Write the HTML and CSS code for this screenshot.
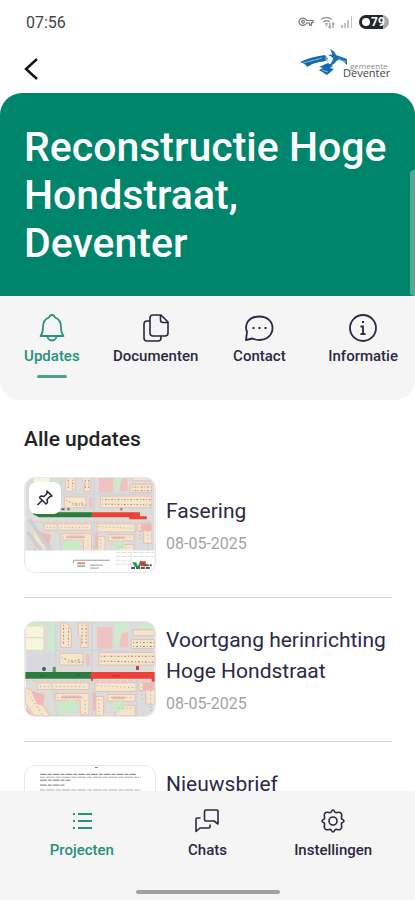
FILE: index.html
```html
<!DOCTYPE html>
<html lang="nl">
<head>
<meta charset="utf-8">
<meta name="viewport" content="width=device-width, initial-scale=1">
<title>Reconstructie Hoge Hondstraat</title>
<link rel="stylesheet" href="styles.css">
</head>
<body>
<svg class="defs" aria-hidden="true">
  <defs>
    <symbol id="streets" viewBox="0 0 132 96">
      <rect width="132" height="96" fill="#dcdddb"/>
      <path d="M0 4h19v25H0z" fill="#f9f5da" stroke="#ddd6c0"/><path d="M0 16h19" stroke="#ddd6c0"/>
      <path d="M0 31h30v20H0z" fill="#d8d8df"/>
      <path d="M25 0h6v30h-8zM2 0h18v4H2zM92 0h15l-4 16-5 9-9-2 3-9zM118 0h14v8h-16z" fill="#cdebcb"/>
      <path d="M73 5h16v22H73zM98 12l7-2v16h-9zM62 32h4v13h-4z" fill="#efc3c2"/>
      <g fill="#f4e5cb" stroke="#e6bdb4" stroke-width="1">
        <path d="M36 1h5q6 3 6 12v13H36zM54 1h10v25h-8q3-10-2-13zM110 8h22v6h-22zM108 18h24v9h-24zM35 32h24v12H35zM75 31h57v13H75z"/>
        <path d="M12 62h53v7H12zM71 62h42v9H71zM116 62h16v22h-9V70h-7zM31 73h34v22h-9V80H31zM72 76h8v20h-8zM84 74h28v7H84zM92 85h20v11H92z"/>
        <path d="M0 67l9 4 16 25H9L0 83z"/>
      </g>
      <path d="M6 71l14 3-2 11-6-1zM37 75h20v3H37zM67 72h5v18h-5zM88 76h14v3H88zM120 62h12v8h-12zM0 87l8 9H0z" fill="#efb9b8"/>
      <path d="M35 82l15-3 4 6-3 7H36l-4 3zM88 84l10-4 4 8-9 5z" fill="#c9eac6"/>
      <g fill="none" stroke="#9a857b" stroke-width="1" stroke-dasharray="1 2 2 2">
        <path d="M39 3v21M44 6v18M58 3v21M62 3v21M110 21h22M110 25h22M77 35h54M77 40l54 1M37 36q10 6 20 2M44 41h15"/>
      </g>
      <g fill="none" stroke="#bba093" stroke-width="1" stroke-dasharray="1 3">
        <path d="M15 66h48M73 65l38 2M119 66v15M128 66v25M33 77h28M61 80v14M75 79v17M87 77h22M95 88h15M3 73l14 21"/>
      </g>
      <path d="M31 0v51M68 0v96M26 60l7 36M114 60v36M31 29h101" fill="none" stroke="#d2d6da" stroke-width="2"/>
      <path d="M0 60h132" stroke="#e6c2bd" stroke-width="1" stroke-dasharray="5 2"/>
    </symbol>
  </defs>
</svg>

<div class="app">
  <div class="status">
    <span class="status-time">07:56</span>
    <div class="status-icons">
      <svg width="16" height="10" viewBox="0 0 16 10" fill="none" stroke="#777" stroke-width="1.2" aria-hidden="true"><path d="M8.700 3.500H15v2.200h-1.500v2.500h-2V6H8.700A4 3.600 0 1 1 8.700 3.500z"/><circle cx="5" cy="4.800" r="1.400"/></svg>
      <svg width="15" height="13" viewBox="0 0 15 13" fill="none" stroke="#9b9b9b" stroke-width="1.300" aria-hidden="true"><path d="M1 3.500Q6.500-.5 12 3.500M3 6q3.500-2.500 7 0M5 8.200q1.500-1 3 0M6.500 10.500V9M10 7v5l-1.500-1.500M13 12V7l1.500 1.500"/></svg>
      <svg width="12" height="12" viewBox="0 0 12 12" fill="#c2c2c2" aria-hidden="true"><path d="M0 9h2v3H0zM3 7h2v5H3zM6 4h2v8H6zM10 0h1v12h-1z"/></svg>
      <span class="battery"><span class="battery-dot"></span>79</span>
    </div>
  </div>

  <header class="topbar">
    <button class="back" type="button" aria-label="Terug">
      <svg width="14" height="22" viewBox="0 0 14 22" fill="none" stroke="#111" stroke-width="2.400" aria-hidden="true"><path d="M13 1L2 11l11 10"/></svg>
    </button>
    <svg class="logo" width="94" height="40" viewBox="0 0 94 40" role="img" aria-label="gemeente Deventer">
      <path d="M0 13Q10 8 25 6l3 4q-3 3-9 3-6 1-12 5-1-3-7-5z" fill="#1269ad"/>
      <path d="M19 18l9-4 5 3-3 2 4 1-7 6-8-5 4-2z" fill="#1269ad"/>
      <path d="M30 0q5 2 6 6l11 4v6q-3-4-7-5-4 0-5 3-3 3-7 3 5-4 5-8-2-2-5-3 3-1 4 0 0-3-2-6z" fill="#1a70b3"/>
      <path d="M26 7q-1 3 2 6M3 14l19-5M22 21l6 2M38 10l8 3" fill="none" stroke="#8abce0" stroke-width="1"/>
      <text class="logo-small" x="50" y="20">gemeente</text>
      <text class="logo-name" x="43" y="28">Deventer</text>
    </svg>
  </header>

  <main class="page">
    <section class="hero">
      <h1>Reconstructie Hoge Hondstraat, Deventer</h1>
      <span class="scroll-thumb"></span>
    </section>

    <nav class="tabs" aria-label="Project">
      <a class="tab tab-active" href="#updates">
        <svg width="30" height="30" viewBox="0 0 30 30" fill="none" stroke="currentColor" stroke-width="1.800" stroke-linejoin="round" aria-hidden="true"><path d="M3.500 23h23c-2-2.500-2.500-4-2.500-9 0-5-2-8-6-9.500q-1-2.500-3-2.500t-3 2.500C8 6 6 9 6 14c0 5-.5 6.500-2.500 9zM10.500 23a4.500 4.500 0 0 0 9 0"/></svg>
        <span>Updates</span>
      </a>
      <a class="tab" href="#documenten">
        <svg width="30" height="30" viewBox="0 0 30 30" fill="none" stroke="currentColor" stroke-width="1.600" stroke-linejoin="round" aria-hidden="true"><path d="M12 2h8l7 7v11a3 3 0 0 1-3 3H12a3 3 0 0 1-3-3V5a3 3 0 0 1 3-3zM19.500 2.500V7a2.500 2.500 0 0 0 2.500 2.500h4.500M9 8H6a3 3 0 0 0-3 3v14a3 3 0 0 0 3 3h11a3 3 0 0 0 3-3v-2"/></svg>
        <span>Documenten</span>
      </a>
      <a class="tab" href="#contact">
        <svg width="30" height="30" viewBox="0 0 30 30" fill="none" stroke="currentColor" stroke-width="1.800" stroke-linejoin="round" aria-hidden="true"><path d="M2 27l1-8C-.5 10 6 3.500 15.500 3.500c8 0 13 5 13 11.500s-5 12-13 12c-3 0-5-.5-7-1.500z"/><path d="M8.500 15h2M14.500 15h2M20.500 15h2" stroke-width="2"/></svg>
        <span>Contact</span>
      </a>
      <a class="tab" href="#informatie">
        <svg width="30" height="30" viewBox="0 0 30 30" fill="none" stroke="currentColor" stroke-width="1.800" aria-hidden="true"><circle cx="15" cy="15" r="13"/><path d="M12.500 13.500H15V21M12.500 21h5M14 9h2"/></svg>
        <span>Informatie</span>
      </a>
    </nav>

    <section class="updates" id="updates">
      <h2>Alle updates</h2>
      <ul>
        <li>
          <a class="update" href="#fasering">
            <span class="thumb">
              <svg viewBox="0 0 132 96" aria-hidden="true">
                <rect width="132" height="96" fill="#dcdddb"/>
                <use href="#streets" x="8" y="-10" width="121" height="88"/>
                <path d="M4 42l22 33M2 55l16 21" stroke="#ccd0d4" stroke-width="4"/>
                <path d="M8 35h60v5H14l-6-3z" fill="#2b7d3d"/><path d="M68 35h49v4h7v3h-18v-2H68z" fill="#ee4238"/>
                <path d="M37 32h3M43 32h2" stroke="#41694b" stroke-width="2"/><path d="M97 32h2" stroke="#c64b59" stroke-width="2"/>
                <path d="M0 74h132v22H0z" fill="#fff"/>
                <path d="M49 84h37M49 84v3M66 89h13M66 92h9" stroke="#999" fill="none"/>
                <path d="M53 86h8v2h-8z" fill="#d88"/><path d="M53 89h8v2h-8z" fill="#9b8"/>
                <path d="M92 76h40M92 80h40M92 84h18M92 88h18M108 76v16" stroke="#ddd" stroke-dasharray="5 1"/>
                <path d="M109 86h4l2 4 2-5h2l-2 6h-5z" fill="#1f9c55"/><path d="M117 85h6v5h-5z" fill="#d83b36"/>
                <path d="M108 92h20M122 89h7" stroke="#4f5b4b" stroke-width="2" stroke-dasharray="4 1"/>
              </svg>
              <span class="pin">
                <svg width="18" height="18" viewBox="0 0 18 18" fill="none" stroke="#25213f" stroke-width="1.500" stroke-linejoin="round" aria-hidden="true"><path d="M11 2l5 5-2 .5-3 3 .5 3L10 15 3.500 8.500 5 7l3 .5 3-3zM6 11.500L1.500 16"/></svg>
              </span>
            </span>
            <span class="update-text">
              <span class="update-title">Fasering</span>
              <time datetime="2025-05-08">08-05-2025</time>
            </span>
          </a>
        </li>
        <li>
          <a class="update" href="#voortgang">
            <span class="thumb">
              <svg viewBox="0 0 132 96" aria-hidden="true">
                <use href="#streets" width="132" height="96"/>
                <path d="M0 51h67v7H0z" fill="#2b7d3d"/><path d="M67 51h65v10h-3v-3H69v2h-2z" fill="#ee3f38"/>
                <circle cx="19" cy="48" r="2" fill="#35624b"/><path d="M28 46h3v5h-3z" fill="#4d9860"/><path d="M113 45h3v4h-3z" fill="#c83a55"/>
                <path d="M15 55h5M52 54h4" stroke="#1f6532"/><path d="M88 55h8" stroke="#c42d2a"/>
              </svg>
            </span>
            <span class="update-text">
              <span class="update-title">Voortgang herinrichting Hoge Hondstraat</span>
              <time datetime="2025-05-08">08-05-2025</time>
            </span>
          </a>
        </li>
        <li>
          <a class="update update-top" href="#nieuwsbrief">
            <span class="thumb">
              <svg viewBox="0 0 132 96" aria-hidden="true">
                <rect width="132" height="96" fill="#fff"/>
                <g fill="none" stroke="#777" stroke-width="1"><path d="M71 1.500h3"/><path d="M15 8.500h99M15 14.500h31M15 19.500h25" stroke-dasharray="7 1 4 1"/><path d="M15 11.500h103M15 24.500h103" stroke="#aaa" stroke-dasharray="5 1 9 1"/></g>
              </svg>
            </span>
            <span class="update-text"><span class="update-title">Nieuwsbrief</span></span>
          </a>
        </li>
      </ul>
    </section>
  </main>

  <footer class="bottom">
    <nav class="bottom-nav" aria-label="Hoofdmenu">
      <a class="nav-item nav-active" href="#projecten">
        <svg width="24" height="24" viewBox="0 0 24 24" fill="none" stroke="currentColor" stroke-width="2" aria-hidden="true"><path d="M8 5h14M8 12h14M8 19h14M3 5h2M3 12h2M3 19h2"/></svg>
        <span>Projecten</span>
      </a>
      <a class="nav-item" href="#chats">
        <svg width="24" height="24" viewBox="0 0 24 24" fill="none" stroke="currentColor" stroke-width="1.600" stroke-linejoin="round" aria-hidden="true"><path d="M11 1h11a1 1 0 0 1 1 1v13l-4-3h-8a1.500 1.500 0 0 1-1.500-1.500v-8A1.500 1.500 0 0 1 11 1zM5.500 9H2a1 1 0 0 0-1 1v12.500L5 19h9a1 1 0 0 0 1-1v-2.500"/></svg>
        <span>Chats</span>
      </a>
      <a class="nav-item" href="#instellingen">
        <svg width="24" height="24" viewBox="0 0 24 24" fill="none" stroke="currentColor" stroke-width="1.600" stroke-linejoin="round" aria-hidden="true"><path d="M12 1q1 0 1.500 1.500T16 3.500t3 0 1.500 1.500 0 3 1 2.500T23 12t-1.500 1.500-1 2.500 0 3-1.500 1.500-3 0-2.500 1T12 23t-1.500-1.500-2.500-1-3 0T3.500 19t0-3-1-2.500T1 12t1.500-1.500 1-2.500 0-3T5 3.500t3 0 2.500-1T12 1z"/><circle cx="12" cy="12" r="4"/></svg>
        <span>Instellingen</span>
      </a>
    </nav>
    <div class="home-bar"></div>
  </footer>
</div>
</body>
</html>
```

FILE: styles.css
```css
:root {
  --green: #00856d;
  --green-text: #26917a;
  --ink: #2c2846;
  --muted: #a2a2a6;
  --panel: #f5f5f5;
}

* {
  box-sizing: border-box;
}

body {
  margin: 0;
  background: #fff;
  color: var(--ink);
  font-family: Roboto, "Liberation Sans", sans-serif;
}

a {
  color: inherit;
  text-decoration: none;
}

.defs {
  position: absolute;
  width: 0;
  height: 0;
}

.app {
  display: flex;
  flex-direction: column;
  height: 100vh;
  overflow: hidden;
}

.status {
  display: flex;
  flex: none;
  align-items: center;
  justify-content: space-between;
  height: 44px;
  padding: 0 26px;
}

.status-time {
  color: #444;
  font-size: 16px;
}

.status-icons {
  display: flex;
  align-items: center;
  gap: 6px;
}

.battery {
  display: flex;
  align-items: center;
  gap: 1px;
  width: 30px;
  height: 14px;
  padding: 0 3px;
  border-radius: 7px;
  background: linear-gradient(90deg, #262626 80%, #aaa 80%);
  color: #fff;
  font-size: 12px;
  font-weight: 700;
  line-height: 14px;
}

.battery-dot {
  flex: none;
  width: 8px;
  height: 8px;
  border-radius: 50%;
  background: #fff;
}

.topbar {
  display: flex;
  flex: none;
  align-items: center;
  justify-content: space-between;
  height: 49px;
  padding: 0 21px 0 24px;
}

.back {
  display: flex;
  padding: 0;
  border: 0;
  background: none;
}

.logo-small,
.logo-name {
  font-family: "Open Sans", sans-serif;
  fill: #444;
}

.logo-small {
  font-size: 8px;
  fill: #888;
}

.logo-name {
  font-size: 11px;
}

.page {
  flex: 1;
  min-height: 0;
  overflow: hidden;
}

.hero {
  position: relative;
  padding: 30px 24px 29px;
  border-radius: 22px 22px 0 0;
  background: var(--green);
}

.hero h1 {
  margin: 0;
  color: #fff;
  font-size: 41px;
  font-weight: 500;
  line-height: 48px;
}

.scroll-thumb {
  position: absolute;
  right: 0;
  bottom: 0;
  width: 5px;
  height: 126px;
  border-radius: 4px 0 0 4px;
  background: #53a795;
}

.tabs {
  display: grid;
  grid-template-columns: repeat(4, 1fr);
  height: 104px;
  padding-top: 17px;
  border-radius: 0 0 20px 20px;
  background: var(--panel);
}

.tab,
.nav-item {
  display: flex;
  flex-direction: column;
  align-items: center;
  font-size: 15px;
  font-weight: 500;
  line-height: 20px;
}

.tab {
  gap: 3px;
}

.tab-active,
.nav-active {
  color: var(--green-text);
}

.tab-active::after {
  width: 30px;
  height: 3px;
  margin-top: 6px;
  border-radius: 2px;
  background: #4da28c;
  content: "";
}

.updates {
  padding: 24px 23px 0 24px;
}

.updates h2 {
  margin: 0;
  color: #222;
  font-size: 21px;
  font-weight: 500;
  line-height: 30px;
}

.updates ul {
  margin: 0;
  padding: 0;
  list-style: none;
}

.updates li {
  padding: 23px 0 24px;
  border-bottom: 1px solid #d4d4d6;
}

.update {
  display: flex;
  align-items: center;
  gap: 10px;
}

.update-top {
  align-items: flex-start;
}

.thumb {
  position: relative;
  flex: none;
  width: 132px;
  height: 96px;
  overflow: hidden;
  border: 1px solid #e8e8e8;
  border-radius: 11px;
}

.thumb > svg {
  display: block;
  width: 100%;
  height: 100%;
}

.pin {
  position: absolute;
  top: 4px;
  left: 4px;
  display: grid;
  place-items: center;
  width: 32px;
  height: 32px;
  border-radius: 8px;
  background: #fff;
}

.update-text {
  display: flex;
  flex: 1;
  flex-direction: column;
  gap: 7px;
  min-width: 0;
}

.update-title {
  font-size: 21px;
  line-height: 31px;
}

.update-text time {
  color: var(--muted);
  font-size: 16px;
  line-height: 20px;
}

.update-top .update-title {
  padding-top: 4px;
}

.bottom {
  flex: none;
  padding: 18px 19px 6px;
  background: var(--panel);
}

.bottom-nav {
  display: grid;
  grid-template-columns: repeat(3, 1fr);
}

.nav-item {
  gap: 7px;
}

.home-bar {
  width: 144px;
  height: 4px;
  margin: 30px auto 0;
  border-radius: 2px;
  background: #a0a0a0;
}
```
